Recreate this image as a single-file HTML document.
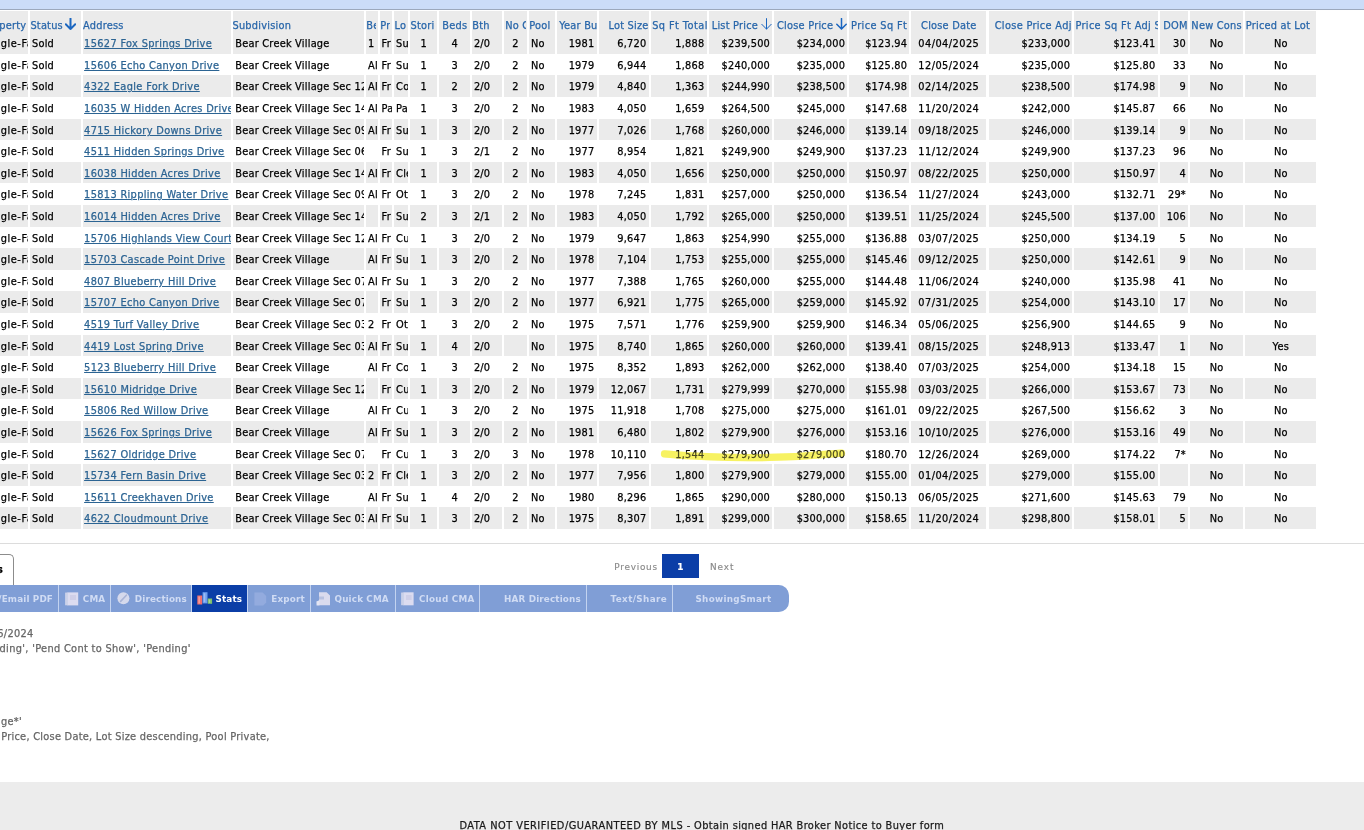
<!DOCTYPE html>
<html lang="en"><head><meta charset="utf-8"><title>Search Results</title>
<style>

html,body{margin:0;padding:0;background:#fff;}
body{width:1364px;height:830px;overflow:hidden;position:relative;font-family:"DejaVu Sans","Liberation Sans",sans-serif;font-size:9.8px;letter-spacing:0.22px;color:#000;-webkit-text-stroke:0.25px;}
#topband{position:absolute;left:0;top:0;width:1364px;height:9px;background:#cbdcf8;border-bottom:1px solid #9ca8bc;}
#grid{position:absolute;left:0;top:0;width:1364px;height:540px;}
.r,.h{position:absolute;left:0;width:1364px;}
.r{line-height:14px;box-sizing:border-box;}
.h{top:11px;height:21px;line-height:14px;color:#2866aa;}
.c{position:absolute;top:0;height:100%;padding-top:inherit;box-sizing:border-box;overflow:hidden;white-space:nowrap;}
.h .c{background:#ebebeb;padding-top:8px;}
.g .c{background:#ebebeb;}

.h .k4,.h .k5,.h .k6,.h .k7{border-right:2px solid #ebebeb}.h .k10{border-right:1px solid #ebebeb}
.pt{position:absolute;left:23.95px;letter-spacing:0.55px}.h .pt{left:23.1px;letter-spacing:0.22px}
a{color:#2c6493;text-decoration:underline;letter-spacing:0.34px;}
.r .k18{letter-spacing:0.46px;}
.h .k14{letter-spacing:0.42px}.h .k17{letter-spacing:0.37px}.h .k19{letter-spacing:0.32px}.h .k20{letter-spacing:0.34px}
.ar{display:inline-block;vertical-align:-1px;margin-left:2.5px;margin-top:-4px;}

.k0{left:-40px;width:68.0px}
.r .k0{text-align:left;padding-left:0px;}
.h .k0{text-align:left;padding-left:0px;}
.k1{left:30.0px;width:51.0px}
.r .k1{text-align:left;padding-left:2.0px;}
.h .k1{text-align:left;padding-left:0.4px;}
.k2{left:83.0px;width:147.5px}
.r .k2{text-align:left;padding-left:1.1px;}
.h .k2{text-align:left;padding-left:0.1px;}
.k3{left:232.5px;width:131.5px}
.r .k3{text-align:left;padding-left:2.8px;}
.h .k3{text-align:left;padding-left:0.0px;}
.k4{left:366.0px;width:11.9px}
.r .k4{text-align:left;padding-left:2.0px;}
.h .k4{text-align:left;padding-left:0.3px;}
.k5{left:380.0px;width:12.2px}
.r .k5{text-align:left;padding-left:1.6px;}
.h .k5{text-align:left;padding-left:0.3px;}
.k6{left:394.3px;width:14.0px}
.r .k6{text-align:left;padding-left:1.8px;}
.h .k6{text-align:left;padding-left:0.3px;}
.k7{left:410.3px;width:27.1px}
.r .k7{text-align:center;}
.h .k7{text-align:left;padding-left:0.3px;}
.k8{left:439.4px;width:30.9px}
.r .k8{text-align:center;}
.h .k8{text-align:center;}
.k9{left:472.3px;width:30.0px}
.r .k9{text-align:left;padding-left:1.6px;}
.h .k9{text-align:left;padding-left:0.0px;}
.k10{left:504.2px;width:22.7px}
.r .k10{text-align:center;}
.h .k10{text-align:left;padding-left:1.0px;}
.k11{left:529.0px;width:26.0px}
.r .k11{text-align:left;padding-left:2.0px;}
.h .k11{text-align:left;padding-left:0.2px;}
.k12{left:557.2px;width:39.8px}
.r .k12{text-align:right;padding-right:2.5px;}
.h .k12{text-align:left;padding-left:2.0px;}
.k13{left:599.3px;width:49.8px}
.r .k13{text-align:right;padding-right:2.7px;}
.h .k13{text-align:right;padding-right:0.5px;}
.k14{left:651.4px;width:55.8px}
.r .k14{text-align:right;padding-right:2.8px;}
.h .k14{text-align:left;padding-left:0.8px;}
.k15{left:709.4px;width:62.7px}
.r .k15{text-align:right;padding-right:2.0px;}
.h .k15{text-align:right;padding-right:0.5px;}
.k16{left:774.4px;width:72.8px}
.r .k16{text-align:right;padding-right:2.0px;}
.h .k16{text-align:right;padding-right:0.5px;}
.k17{left:849.4px;width:59.8px}
.r .k17{text-align:right;padding-right:2.0px;}
.h .k17{text-align:right;padding-right:2.0px;}
.k18{left:911.4px;width:74.8px}
.r .k18{text-align:center;}
.h .k18{text-align:center;}
.k19{left:988.5px;width:83.6px}
.r .k19{text-align:right;padding-right:2.0px;}
.h .k19{text-align:right;padding-right:0.3px;}
.k20{left:1074.4px;width:83.7px}
.r .k20{text-align:right;padding-right:2.6px;}
.h .k20{text-align:left;padding-left:1.0px;}
.k21{left:1160.3px;width:27.9px}
.r .k21{text-align:right;padding-right:2.2px;}
.h .k21{text-align:right;padding-right:0.6px;}
.k22{left:1190.3px;width:52.5px}
.r .k22{text-align:center;}
.h .k22{text-align:center;}
.k23{left:1245.2px;width:71.2px}
.r .k23{text-align:center;}
.h .k23{text-align:left;padding-left:0.6px;}
#hr{position:absolute;left:0;top:543px;width:1364px;height:1px;background:#dcdcdc;}
#tab{position:absolute;left:-60px;top:554px;width:74px;height:32px;border:1px solid #8c8c8c;border-bottom:none;border-top-right-radius:5px;box-sizing:border-box;background:#fff;}
#tab span{position:absolute;right:10px;top:8px;font-weight:bold;font-size:9.8px;line-height:14px;letter-spacing:0.1px;}
#pager{position:absolute;left:0;top:554px;width:1364px;height:24px;color:#8a8a8a;line-height:14px;font-size:8.9px;-webkit-text-stroke:0.15px;}
#pager span{position:absolute;top:6px;}
#pager .pv{left:614.2px;letter-spacing:0.78px}
#pager .nx{left:710px;letter-spacing:0.95px}
#pager .pg{left:662px;top:0;width:36.7px;height:23.5px;background:#0b3ea7;color:#fff;font-weight:bold;text-align:center;line-height:27px;box-sizing:border-box;}
#tb{position:absolute;left:0;top:585px;width:789px;height:26.7px;background:#c3d3f0;border-radius:0 10.5px 10.5px 0;overflow:hidden;font-weight:bold;font-size:8.8px;letter-spacing:0.15px;color:#d0dcf4;-webkit-text-stroke:0;}
.b{position:absolute;top:0;height:100%;background:#809ed6;}
.b.on{background:#0b3ea7;color:#fff;}
.b .t{position:absolute;top:7px;line-height:14px;white-space:nowrap;}
.b .i{position:absolute;}
.crit{position:absolute;white-space:nowrap;color:#666;line-height:14px;letter-spacing:0.27px;}
#foot{position:absolute;left:0;top:782px;width:1364px;height:48px;background:#ececec;}
#ft{position:absolute;left:459.4px;top:37px;line-height:14px;white-space:nowrap;color:#1a1a1a;letter-spacing:0.39px;}

</style></head><body>
<div id="topband"></div>
<div id="grid">
<div class="h"><div class="c k0"><span class="pt">Property Type</span></div><div class="c k1">Status<svg class="ar " width="11" height="12" viewBox="0 0 11 12"><path d="M5.5 0.6V11M0.8 6.3L5.5 11.1L10.2 6.3" fill="none" stroke="#1b66c0" stroke-width="2.0" stroke-linecap="round" stroke-linejoin="round"/></svg></div><div class="c k2">Address</div><div class="c k3">Subdivision</div><div class="c k4">Bedroom Desc</div><div class="c k5">Prop Desc</div><div class="c k6">Lot Desc</div><div class="c k7">Stories</div><div class="c k8">Beds</div><div class="c k9">Bth</div><div class="c k10">No Garage</div><div class="c k11">Pool</div><div class="c k12">Year Built</div><div class="c k13">Lot Size</div><div class="c k14">Sq Ft Total</div><div class="c k15">List Price<svg class="ar " width="11" height="12" viewBox="0 0 11 12"><path d="M5.5 0.6V11M0.8 6.3L5.5 11.1L10.2 6.3" fill="none" stroke="#1b66c0" stroke-width="1.0" stroke-linecap="round" stroke-linejoin="round"/></svg></div><div class="c k16">Close Price<svg class="ar " width="11" height="12" viewBox="0 0 11 12"><path d="M5.5 0.6V11M0.8 6.3L5.5 11.1L10.2 6.3" fill="none" stroke="#1b66c0" stroke-width="1.5" stroke-linecap="round" stroke-linejoin="round"/></svg></div><div class="c k17">Price Sq Ft</div><div class="c k18">Close Date</div><div class="c k19">Close Price Adj</div><div class="c k20">Price Sq Ft Adj Sold</div><div class="c k21">DOM</div><div class="c k22">New Cons</div><div class="c k23">Priced at Lot</div></div>
<div class="r g" style="top:32px;height:22px;padding-top:5px"><div class="c k0"><span class="pt">Single-Family</span></div><div class="c k1">Sold</div><div class="c k2"><a>15627 Fox Springs Drive</a></div><div class="c k3">Bear Creek Village</div><div class="c k4">1</div><div class="c k5">Fr</div><div class="c k6">Su</div><div class="c k7">1</div><div class="c k8">4</div><div class="c k9">2/0</div><div class="c k10">2</div><div class="c k11">No</div><div class="c k12">1981</div><div class="c k13">6,720</div><div class="c k14">1,888</div><div class="c k15">$239,500</div><div class="c k16">$234,000</div><div class="c k17">$123.94</div><div class="c k18">04/04/2025</div><div class="c k19">$233,000</div><div class="c k20">$123.41</div><div class="c k21">30</div><div class="c k22">No</div><div class="c k23">No</div></div>
<div class="r" style="top:54px;height:21px;padding-top:5px"><div class="c k0"><span class="pt">Single-Family</span></div><div class="c k1">Sold</div><div class="c k2"><a>15606 Echo Canyon Drive</a></div><div class="c k3">Bear Creek Village</div><div class="c k4">Al</div><div class="c k5">Fr</div><div class="c k6">Su</div><div class="c k7">1</div><div class="c k8">3</div><div class="c k9">2/0</div><div class="c k10">2</div><div class="c k11">No</div><div class="c k12">1979</div><div class="c k13">6,944</div><div class="c k14">1,868</div><div class="c k15">$240,000</div><div class="c k16">$235,000</div><div class="c k17">$125.80</div><div class="c k18">12/05/2024</div><div class="c k19">$235,000</div><div class="c k20">$125.80</div><div class="c k21">33</div><div class="c k22">No</div><div class="c k23">No</div></div>
<div class="r g" style="top:75px;height:22px;padding-top:5px"><div class="c k0"><span class="pt">Single-Family</span></div><div class="c k1">Sold</div><div class="c k2"><a>4322 Eagle Fork Drive</a></div><div class="c k3">Bear Creek Village Sec 12</div><div class="c k4">Al</div><div class="c k5">Fr</div><div class="c k6">Co</div><div class="c k7">1</div><div class="c k8">2</div><div class="c k9">2/0</div><div class="c k10">2</div><div class="c k11">No</div><div class="c k12">1979</div><div class="c k13">4,840</div><div class="c k14">1,363</div><div class="c k15">$244,990</div><div class="c k16">$238,500</div><div class="c k17">$174.98</div><div class="c k18">02/14/2025</div><div class="c k19">$238,500</div><div class="c k20">$174.98</div><div class="c k21">9</div><div class="c k22">No</div><div class="c k23">No</div></div>
<div class="r" style="top:97px;height:22px;padding-top:5px"><div class="c k0"><span class="pt">Single-Family</span></div><div class="c k1">Sold</div><div class="c k2"><a>16035 W Hidden Acres Drive</a></div><div class="c k3">Bear Creek Village Sec 14</div><div class="c k4">Al</div><div class="c k5">Pa</div><div class="c k6">Pa</div><div class="c k7">1</div><div class="c k8">3</div><div class="c k9">2/0</div><div class="c k10">2</div><div class="c k11">No</div><div class="c k12">1983</div><div class="c k13">4,050</div><div class="c k14">1,659</div><div class="c k15">$264,500</div><div class="c k16">$245,000</div><div class="c k17">$147.68</div><div class="c k18">11/20/2024</div><div class="c k19">$242,000</div><div class="c k20">$145.87</div><div class="c k21">66</div><div class="c k22">No</div><div class="c k23">No</div></div>
<div class="r g" style="top:119px;height:21px;padding-top:5px"><div class="c k0"><span class="pt">Single-Family</span></div><div class="c k1">Sold</div><div class="c k2"><a>4715 Hickory Downs Drive</a></div><div class="c k3">Bear Creek Village Sec 09</div><div class="c k4">Al</div><div class="c k5">Fr</div><div class="c k6">Su</div><div class="c k7">1</div><div class="c k8">3</div><div class="c k9">2/0</div><div class="c k10">2</div><div class="c k11">No</div><div class="c k12">1977</div><div class="c k13">7,026</div><div class="c k14">1,768</div><div class="c k15">$260,000</div><div class="c k16">$246,000</div><div class="c k17">$139.14</div><div class="c k18">09/18/2025</div><div class="c k19">$246,000</div><div class="c k20">$139.14</div><div class="c k21">9</div><div class="c k22">No</div><div class="c k23">No</div></div>
<div class="r" style="top:140px;height:22px;padding-top:5px"><div class="c k0"><span class="pt">Single-Family</span></div><div class="c k1">Sold</div><div class="c k2"><a>4511 Hidden Springs Drive</a></div><div class="c k3">Bear Creek Village Sec 06</div><div class="c k4"></div><div class="c k5">Fr</div><div class="c k6">Su</div><div class="c k7">1</div><div class="c k8">3</div><div class="c k9">2/1</div><div class="c k10">2</div><div class="c k11">No</div><div class="c k12">1977</div><div class="c k13">8,954</div><div class="c k14">1,821</div><div class="c k15">$249,900</div><div class="c k16">$249,900</div><div class="c k17">$137.23</div><div class="c k18">11/12/2024</div><div class="c k19">$249,900</div><div class="c k20">$137.23</div><div class="c k21">96</div><div class="c k22">No</div><div class="c k23">No</div></div>
<div class="r g" style="top:162px;height:21px;padding-top:5px"><div class="c k0"><span class="pt">Single-Family</span></div><div class="c k1">Sold</div><div class="c k2"><a>16038 Hidden Acres Drive</a></div><div class="c k3">Bear Creek Village Sec 14</div><div class="c k4">Al</div><div class="c k5">Fr</div><div class="c k6">Cle</div><div class="c k7">1</div><div class="c k8">3</div><div class="c k9">2/0</div><div class="c k10">2</div><div class="c k11">No</div><div class="c k12">1983</div><div class="c k13">4,050</div><div class="c k14">1,656</div><div class="c k15">$250,000</div><div class="c k16">$250,000</div><div class="c k17">$150.97</div><div class="c k18">08/22/2025</div><div class="c k19">$250,000</div><div class="c k20">$150.97</div><div class="c k21">4</div><div class="c k22">No</div><div class="c k23">No</div></div>
<div class="r" style="top:183px;height:22px;padding-top:5px"><div class="c k0"><span class="pt">Single-Family</span></div><div class="c k1">Sold</div><div class="c k2"><a>15813 Rippling Water Drive</a></div><div class="c k3">Bear Creek Village Sec 09</div><div class="c k4">Al</div><div class="c k5">Fr</div><div class="c k6">Ot</div><div class="c k7">1</div><div class="c k8">3</div><div class="c k9">2/0</div><div class="c k10">2</div><div class="c k11">No</div><div class="c k12">1978</div><div class="c k13">7,245</div><div class="c k14">1,831</div><div class="c k15">$257,000</div><div class="c k16">$250,000</div><div class="c k17">$136.54</div><div class="c k18">11/27/2024</div><div class="c k19">$243,000</div><div class="c k20">$132.71</div><div class="c k21">29*</div><div class="c k22">No</div><div class="c k23">No</div></div>
<div class="r g" style="top:205px;height:22px;padding-top:5px"><div class="c k0"><span class="pt">Single-Family</span></div><div class="c k1">Sold</div><div class="c k2"><a>16014 Hidden Acres Drive</a></div><div class="c k3">Bear Creek Village Sec 14</div><div class="c k4"></div><div class="c k5">Fr</div><div class="c k6">Su</div><div class="c k7">2</div><div class="c k8">3</div><div class="c k9">2/1</div><div class="c k10">2</div><div class="c k11">No</div><div class="c k12">1983</div><div class="c k13">4,050</div><div class="c k14">1,792</div><div class="c k15">$265,000</div><div class="c k16">$250,000</div><div class="c k17">$139.51</div><div class="c k18">11/25/2024</div><div class="c k19">$245,500</div><div class="c k20">$137.00</div><div class="c k21">106</div><div class="c k22">No</div><div class="c k23">No</div></div>
<div class="r" style="top:227px;height:21px;padding-top:5px"><div class="c k0"><span class="pt">Single-Family</span></div><div class="c k1">Sold</div><div class="c k2"><a>15706 Highlands View Court</a></div><div class="c k3">Bear Creek Village Sec 12</div><div class="c k4">Al</div><div class="c k5">Fr</div><div class="c k6">Cu</div><div class="c k7">1</div><div class="c k8">3</div><div class="c k9">2/0</div><div class="c k10">2</div><div class="c k11">No</div><div class="c k12">1979</div><div class="c k13">9,647</div><div class="c k14">1,863</div><div class="c k15">$254,990</div><div class="c k16">$255,000</div><div class="c k17">$136.88</div><div class="c k18">03/07/2025</div><div class="c k19">$250,000</div><div class="c k20">$134.19</div><div class="c k21">5</div><div class="c k22">No</div><div class="c k23">No</div></div>
<div class="r g" style="top:248px;height:22px;padding-top:5px"><div class="c k0"><span class="pt">Single-Family</span></div><div class="c k1">Sold</div><div class="c k2"><a>15703 Cascade Point Drive</a></div><div class="c k3">Bear Creek Village</div><div class="c k4">Al</div><div class="c k5">Fr</div><div class="c k6">Su</div><div class="c k7">1</div><div class="c k8">3</div><div class="c k9">2/0</div><div class="c k10">2</div><div class="c k11">No</div><div class="c k12">1978</div><div class="c k13">7,104</div><div class="c k14">1,753</div><div class="c k15">$255,000</div><div class="c k16">$255,000</div><div class="c k17">$145.46</div><div class="c k18">09/12/2025</div><div class="c k19">$250,000</div><div class="c k20">$142.61</div><div class="c k21">9</div><div class="c k22">No</div><div class="c k23">No</div></div>
<div class="r" style="top:270px;height:21px;padding-top:5px"><div class="c k0"><span class="pt">Single-Family</span></div><div class="c k1">Sold</div><div class="c k2"><a>4807 Blueberry Hill Drive</a></div><div class="c k3">Bear Creek Village Sec 07</div><div class="c k4">Al</div><div class="c k5">Fr</div><div class="c k6">Su</div><div class="c k7">1</div><div class="c k8">3</div><div class="c k9">2/0</div><div class="c k10">2</div><div class="c k11">No</div><div class="c k12">1977</div><div class="c k13">7,388</div><div class="c k14">1,765</div><div class="c k15">$260,000</div><div class="c k16">$255,000</div><div class="c k17">$144.48</div><div class="c k18">11/06/2024</div><div class="c k19">$240,000</div><div class="c k20">$135.98</div><div class="c k21">41</div><div class="c k22">No</div><div class="c k23">No</div></div>
<div class="r g" style="top:291px;height:22px;padding-top:5px"><div class="c k0"><span class="pt">Single-Family</span></div><div class="c k1">Sold</div><div class="c k2"><a>15707 Echo Canyon Drive</a></div><div class="c k3">Bear Creek Village Sec 07</div><div class="c k4"></div><div class="c k5">Fr</div><div class="c k6">Su</div><div class="c k7">1</div><div class="c k8">3</div><div class="c k9">2/0</div><div class="c k10">2</div><div class="c k11">No</div><div class="c k12">1977</div><div class="c k13">6,921</div><div class="c k14">1,775</div><div class="c k15">$265,000</div><div class="c k16">$259,000</div><div class="c k17">$145.92</div><div class="c k18">07/31/2025</div><div class="c k19">$254,000</div><div class="c k20">$143.10</div><div class="c k21">17</div><div class="c k22">No</div><div class="c k23">No</div></div>
<div class="r" style="top:313px;height:22px;padding-top:5px"><div class="c k0"><span class="pt">Single-Family</span></div><div class="c k1">Sold</div><div class="c k2"><a>4519 Turf Valley Drive</a></div><div class="c k3">Bear Creek Village Sec 03</div><div class="c k4">2</div><div class="c k5">Fr</div><div class="c k6">Ot</div><div class="c k7">1</div><div class="c k8">3</div><div class="c k9">2/0</div><div class="c k10">2</div><div class="c k11">No</div><div class="c k12">1975</div><div class="c k13">7,571</div><div class="c k14">1,776</div><div class="c k15">$259,900</div><div class="c k16">$259,900</div><div class="c k17">$146.34</div><div class="c k18">05/06/2025</div><div class="c k19">$256,900</div><div class="c k20">$144.65</div><div class="c k21">9</div><div class="c k22">No</div><div class="c k23">No</div></div>
<div class="r g" style="top:335px;height:21px;padding-top:5px"><div class="c k0"><span class="pt">Single-Family</span></div><div class="c k1">Sold</div><div class="c k2"><a>4419 Lost Spring Drive</a></div><div class="c k3">Bear Creek Village Sec 03</div><div class="c k4">Al</div><div class="c k5">Fr</div><div class="c k6">Su</div><div class="c k7">1</div><div class="c k8">4</div><div class="c k9">2/0</div><div class="c k10"></div><div class="c k11">No</div><div class="c k12">1975</div><div class="c k13">8,740</div><div class="c k14">1,865</div><div class="c k15">$260,000</div><div class="c k16">$260,000</div><div class="c k17">$139.41</div><div class="c k18">08/15/2025</div><div class="c k19">$248,913</div><div class="c k20">$133.47</div><div class="c k21">1</div><div class="c k22">No</div><div class="c k23">Yes</div></div>
<div class="r" style="top:356px;height:22px;padding-top:5px"><div class="c k0"><span class="pt">Single-Family</span></div><div class="c k1">Sold</div><div class="c k2"><a>5123 Blueberry Hill Drive</a></div><div class="c k3">Bear Creek Village</div><div class="c k4">Al</div><div class="c k5">Fr</div><div class="c k6">Co</div><div class="c k7">1</div><div class="c k8">3</div><div class="c k9">2/0</div><div class="c k10">2</div><div class="c k11">No</div><div class="c k12">1975</div><div class="c k13">8,352</div><div class="c k14">1,893</div><div class="c k15">$262,000</div><div class="c k16">$262,000</div><div class="c k17">$138.40</div><div class="c k18">07/03/2025</div><div class="c k19">$254,000</div><div class="c k20">$134.18</div><div class="c k21">15</div><div class="c k22">No</div><div class="c k23">No</div></div>
<div class="r g" style="top:378px;height:21px;padding-top:5px"><div class="c k0"><span class="pt">Single-Family</span></div><div class="c k1">Sold</div><div class="c k2"><a>15610 Midridge Drive</a></div><div class="c k3">Bear Creek Village Sec 12</div><div class="c k4"></div><div class="c k5">Fr</div><div class="c k6">Cu</div><div class="c k7">1</div><div class="c k8">3</div><div class="c k9">2/0</div><div class="c k10">2</div><div class="c k11">No</div><div class="c k12">1979</div><div class="c k13">12,067</div><div class="c k14">1,731</div><div class="c k15">$279,999</div><div class="c k16">$270,000</div><div class="c k17">$155.98</div><div class="c k18">03/03/2025</div><div class="c k19">$266,000</div><div class="c k20">$153.67</div><div class="c k21">73</div><div class="c k22">No</div><div class="c k23">No</div></div>
<div class="r" style="top:399px;height:22px;padding-top:5px"><div class="c k0"><span class="pt">Single-Family</span></div><div class="c k1">Sold</div><div class="c k2"><a>15806 Red Willow Drive</a></div><div class="c k3">Bear Creek Village</div><div class="c k4">Al</div><div class="c k5">Fr</div><div class="c k6">Cu</div><div class="c k7">1</div><div class="c k8">3</div><div class="c k9">2/0</div><div class="c k10">2</div><div class="c k11">No</div><div class="c k12">1975</div><div class="c k13">11,918</div><div class="c k14">1,708</div><div class="c k15">$275,000</div><div class="c k16">$275,000</div><div class="c k17">$161.01</div><div class="c k18">09/22/2025</div><div class="c k19">$267,500</div><div class="c k20">$156.62</div><div class="c k21">3</div><div class="c k22">No</div><div class="c k23">No</div></div>
<div class="r g" style="top:421px;height:22px;padding-top:5px"><div class="c k0"><span class="pt">Single-Family</span></div><div class="c k1">Sold</div><div class="c k2"><a>15626 Fox Springs Drive</a></div><div class="c k3">Bear Creek Village</div><div class="c k4">Al</div><div class="c k5">Fr</div><div class="c k6">Su</div><div class="c k7">1</div><div class="c k8">3</div><div class="c k9">2/0</div><div class="c k10">2</div><div class="c k11">No</div><div class="c k12">1981</div><div class="c k13">6,480</div><div class="c k14">1,802</div><div class="c k15">$279,900</div><div class="c k16">$276,000</div><div class="c k17">$153.16</div><div class="c k18">10/10/2025</div><div class="c k19">$276,000</div><div class="c k20">$153.16</div><div class="c k21">49</div><div class="c k22">No</div><div class="c k23">No</div></div>
<div class="r" style="top:443px;height:21px;padding-top:5px"><div class="c k0"><span class="pt">Single-Family</span></div><div class="c k1">Sold</div><div class="c k2"><a>15627 Oldridge Drive</a></div><div class="c k3">Bear Creek Village Sec 07</div><div class="c k4"></div><div class="c k5">Fr</div><div class="c k6">Cu</div><div class="c k7">1</div><div class="c k8">3</div><div class="c k9">2/0</div><div class="c k10">3</div><div class="c k11">No</div><div class="c k12">1978</div><div class="c k13">10,110</div><div class="c k14">1,544</div><div class="c k15">$279,900</div><div class="c k16">$279,000</div><div class="c k17">$180.70</div><div class="c k18">12/26/2024</div><div class="c k19">$269,000</div><div class="c k20">$174.22</div><div class="c k21">7*</div><div class="c k22">No</div><div class="c k23">No</div></div>
<div class="r g" style="top:464px;height:22px;padding-top:5px"><div class="c k0"><span class="pt">Single-Family</span></div><div class="c k1">Sold</div><div class="c k2"><a>15734 Fern Basin Drive</a></div><div class="c k3">Bear Creek Village Sec 03</div><div class="c k4">2</div><div class="c k5">Fr</div><div class="c k6">Cle</div><div class="c k7">1</div><div class="c k8">3</div><div class="c k9">2/0</div><div class="c k10">2</div><div class="c k11">No</div><div class="c k12">1977</div><div class="c k13">7,956</div><div class="c k14">1,800</div><div class="c k15">$279,900</div><div class="c k16">$279,000</div><div class="c k17">$155.00</div><div class="c k18">01/04/2025</div><div class="c k19">$279,000</div><div class="c k20">$155.00</div><div class="c k21"></div><div class="c k22">No</div><div class="c k23">No</div></div>
<div class="r" style="top:486px;height:21px;padding-top:5px"><div class="c k0"><span class="pt">Single-Family</span></div><div class="c k1">Sold</div><div class="c k2"><a>15611 Creekhaven Drive</a></div><div class="c k3">Bear Creek Village</div><div class="c k4">Al</div><div class="c k5">Fr</div><div class="c k6">Su</div><div class="c k7">1</div><div class="c k8">4</div><div class="c k9">2/0</div><div class="c k10">2</div><div class="c k11">No</div><div class="c k12">1980</div><div class="c k13">8,296</div><div class="c k14">1,865</div><div class="c k15">$290,000</div><div class="c k16">$280,000</div><div class="c k17">$150.13</div><div class="c k18">06/05/2025</div><div class="c k19">$271,600</div><div class="c k20">$145.63</div><div class="c k21">79</div><div class="c k22">No</div><div class="c k23">No</div></div>
<div class="r g" style="top:507px;height:22px;padding-top:5px"><div class="c k0"><span class="pt">Single-Family</span></div><div class="c k1">Sold</div><div class="c k2"><a>4622 Cloudmount Drive</a></div><div class="c k3">Bear Creek Village Sec 03</div><div class="c k4">Al</div><div class="c k5">Fr</div><div class="c k6">Su</div><div class="c k7">1</div><div class="c k8">3</div><div class="c k9">2/0</div><div class="c k10">2</div><div class="c k11">No</div><div class="c k12">1975</div><div class="c k13">8,307</div><div class="c k14">1,891</div><div class="c k15">$299,000</div><div class="c k16">$300,000</div><div class="c k17">$158.65</div><div class="c k18">11/20/2024</div><div class="c k19">$298,800</div><div class="c k20">$158.01</div><div class="c k21">5</div><div class="c k22">No</div><div class="c k23">No</div></div>
</div>
<div id="hr"></div>
<div id="tab"><span>Results</span></div>
<div id="pager"><span class="pv">Previous</span><span class="pg">1</span><span class="nx">Next</span></div>
<div id="tb">
 <div class="b" style="left:0;width:58px"><span class="t" style="right:5px">Print/Email PDF</span></div>
 <div class="b" style="left:59.4px;width:50.9px">
  <svg class="i" style="left:5.4px;top:6.6px" width="14" height="14" viewBox="0 0 14 14"><rect x="2.2" y="0.4" width="11" height="13" fill="#dcdcf0"/><rect x="0.2" y="0.4" width="2.6" height="13" fill="#b9c3e2"/><path d="M0 2h3M0 4h3M0 6h3M0 8h3M0 10h3M0 12h3" stroke="#e4e6f4" stroke-width="0.8"/><rect x="5" y="3" width="6" height="5" fill="#cfcfe8"/></svg>
  <span class="t" style="left:23.4px">CMA</span></div>
 <div class="b" style="left:111px;width:80px">
  <svg class="i" style="left:6px;top:6.8px" width="13" height="13" viewBox="0 0 13 13"><circle cx="6.4" cy="6.3" r="6" fill="#d5d9ec"/><path d="M3.6 9.4L9.4 3.2" stroke="#a9b4d6" stroke-width="1.6" stroke-linecap="round"/></svg>
  <span class="t" style="left:23.8px">Directions</span></div>
 <div class="b on" style="left:192px;width:55px">
  <svg class="i" style="left:4.6px;top:7px" width="16" height="13" viewBox="0 0 16 13"><rect x="0.3" y="3.5" width="4.9" height="9" fill="#f0706f"/><rect x="1.4" y="4.6" width="1.6" height="6.8" fill="#f79a98"/><rect x="5.6" y="0.2" width="4.9" height="11.2" fill="#6d9ff0"/><rect x="6.7" y="1.2" width="1.6" height="9" fill="#9bbdf6"/><rect x="10.8" y="6.5" width="4.3" height="5.3" fill="#7fc06c"/><rect x="11.8" y="7.5" width="1.4" height="3.4" fill="#a9d89a"/></svg>
  <span class="t" style="left:23.5px">Stats</span></div>
 <div class="b" style="left:248px;width:62.3px">
  <svg class="i" style="left:6px;top:6.8px" width="13" height="14" viewBox="0 0 13 14"><path d="M0.4 0.4h8.2l3.6 3.6v6.5l-3 3H0.4z" fill="#93abde"/></svg>
  <span class="t" style="left:23.3px">Export</span></div>
 <div class="b" style="left:311.2px;width:84px">
  <svg class="i" style="left:4.8px;top:6.8px" width="15" height="14" viewBox="0 0 15 14"><path d="M3 0.3h7.6l3.4 3.2v9.8H3z" fill="#dadbee"/><path d="M3 4.5h5v3H3z" fill="#b7c1e0"/><path d="M0.4 9.6l3-1.4v5.4H0.6z" fill="#e3e5f3"/></svg>
  <span class="t" style="left:23.4px">Quick CMA</span></div>
 <div class="b" style="left:396.2px;width:83.2px">
  <svg class="i" style="left:5px;top:6.8px" width="14" height="14" viewBox="0 0 14 14"><rect x="2.2" y="0.3" width="10.4" height="13" fill="#dcdcf0"/><rect x="0.2" y="0.3" width="2.6" height="13" fill="#b9c3e2"/><path d="M0 2h3M0 4h3M0 6h3M0 8h3M0 10h3M0 12h3" stroke="#e4e6f4" stroke-width="0.8"/><rect x="5" y="3" width="5.6" height="5" fill="#cfcfe8"/></svg>
  <span class="t" style="left:22.8px;letter-spacing:0.28px">Cloud CMA</span></div>
 <div class="b" style="left:480.3px;width:106.1px"><span class="t" style="left:23.8px">HAR Directions</span></div>
 <div class="b" style="left:587.3px;width:85.1px"><span class="t" style="left:23.2px;letter-spacing:0.4px">Text/Share</span></div>
 <div class="b last" style="left:673.3px;width:115.5px"><span class="t" style="left:22.2px;letter-spacing:0.3px">ShowingSmart</span></div>
</div>
<div class="crit" style="top:627px;right:1330.6px">Close Date is after 10/16/2024</div>
<div class="crit" style="top:642.4px;right:1173.3px;letter-spacing:0.33px">Status is one of 'Sold', 'Option Pending', 'Pend Cont to Show', 'Pending'</div>
<div class="crit" style="top:714.8px;right:1342px">Subdivision is like 'bear creek village*'</div>
<div class="crit" style="top:729.6px;right:1094.3px">Ordered by Status, List Price, Close Price, Close Date, Lot Size descending, Pool Private,</div>
<div id="foot"><div id="ft"><span style="letter-spacing:0.48px">DATA NOT VERIFIED/GUARANTEED BY MLS</span> - Obtain signed HAR Broker Notice to Buyer form</div></div>
<svg id="hl" width="200" height="24" viewBox="0 0 200 24" style="position:absolute;left:655px;top:444px"><path d="M9.5 9.9Q98 17.85 186.5 9.2" fill="none" stroke="#f7f362" stroke-width="7.2" stroke-linecap="round" style="mix-blend-mode:multiply"/><path d="M9.5 9.9Q98 17.85 186.5 9.2" fill="none" stroke="#f7f362" stroke-opacity="0.3" stroke-width="7.2" stroke-linecap="round"/></svg>

</body></html>
